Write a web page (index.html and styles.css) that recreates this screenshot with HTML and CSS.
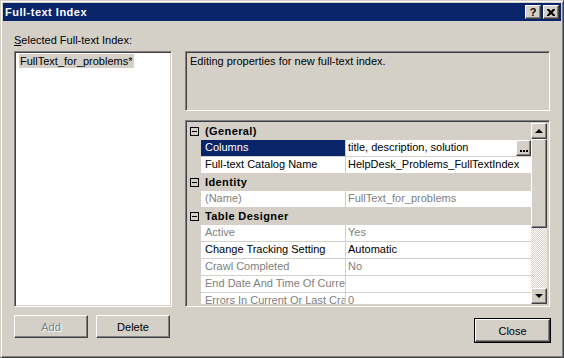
FILE: index.html
```html
<!DOCTYPE html>
<html lang="en">

<head>
    <meta charset="UTF-8">
    <title>Full-text Index</title>
    <link rel="stylesheet" href="styles.css">
</head>

<body>

    <div class="window">

        <header class="titlebar">
            <span class="title">Full-text Index</span>
            <div class="caption-buttons">
                <button class="cap-btn help">?</button>
                <button class="cap-btn">
                    <svg width="8" height="7" viewBox="0 0 8 7">
                        <path d="M0 0h2l2 2 2-2h2v1L5.5 3.5 8 6v1H6L4 5 2 7H0V6l2.5-2.5L0 1z" fill="#000" />
                    </svg>
                </button>
            </div>
        </header>

        <section class="content">

            <div class="label"><u>S</u>elected Full-text Index:</div>

            <div class="listbox sunken">
                <span class="list-item">FullText_for_problems*</span>
            </div>

            <div class="right">
                <div class="description sunken">Editing properties for new full-text index.</div>

                <div class="propgrid sunken">
                    <div class="rows">
                        <div class="row category"><span class="expander"></span>(General)</div>
                        <div class="row selected">
                            <span class="margin"></span>
                            <span class="name">Columns</span>
                            <span class="value">
                                <span class="value-text">title, description, solution</span>
                                <span class="ellipsis">
                                    <svg width="8" height="2" viewBox="0 0 8 2">
                                        <rect x="0" y="0" width="2" height="2" fill="#000" />
                                        <rect x="3" y="0" width="2" height="2" fill="#000" />
                                        <rect x="6" y="0" width="2" height="2" fill="#000" />
                                    </svg>
                                </span>
                            </span>
                        </div>
                        <div class="row">
                            <span class="margin"></span>
                            <span class="name">Full-text Catalog Name</span>
                            <span class="value">HelpDesk_Problems_FullTextIndex</span>
                        </div>
                        <div class="row category"><span class="expander"></span>Identity</div>
                        <div class="row readonly">
                            <span class="margin"></span>
                            <span class="name">(Name)</span>
                            <span class="value">FullText_for_problems</span>
                        </div>
                        <div class="row category"><span class="expander"></span>Table Designer</div>
                        <div class="row readonly">
                            <span class="margin"></span>
                            <span class="name">Active</span>
                            <span class="value">Yes</span>
                        </div>
                        <div class="row">
                            <span class="margin"></span>
                            <span class="name">Change Tracking Setting</span>
                            <span class="value">Automatic</span>
                        </div>
                        <div class="row readonly">
                            <span class="margin"></span>
                            <span class="name">Crawl Completed</span>
                            <span class="value">No</span>
                        </div>
                        <div class="row readonly">
                            <span class="margin"></span>
                            <span class="name">End Date And Time Of Current Crawl</span>
                            <span class="value"></span>
                        </div>
                        <div class="row readonly">
                            <span class="margin"></span>
                            <span class="name">Errors In Current Or Last Crawl</span>
                            <span class="value">0</span>
                        </div>
                    </div>

                    <div class="scrollbar">
                        <div class="sb-btn"><span class="arrow-up"></span></div>
                        <div class="track">
                            <div class="thumb"></div>
                        </div>
                        <div class="sb-btn"><span class="arrow-down"></span></div>
                    </div>
                </div>
            </div>

            <div class="left-buttons">
                <button class="btn" disabled>Add</button>
                <button class="btn">Delete</button>
            </div>

            <div class="close-cell">
                <button class="btn default">Close</button>
            </div>

        </section>

    </div>

</body>

</html>
```

FILE: styles.css
```css
* {
    box-sizing: border-box;
}

body {
    margin: 0;
    background-color: #d4d0c8;
    font-family: "Liberation Sans", Arial, sans-serif;
    font-size: 11px;
    color: #000;
}

/* classic 3d borders */
.sunken {
    border: 1px solid;
    border-color: #808080 #fff #fff #808080;
    box-shadow: inset 1px 1px #404040, inset -1px -1px #d4d0c8;
}

.btn,
.cap-btn,
.sb-btn,
.thumb,
.ellipsis {
    border: 1px solid;
    border-color: #fff #404040 #404040 #fff;
    box-shadow: inset -1px -1px #808080;
    background-color: #d4d0c8;
}

.window {
    width: 564px;
    height: 358px;
    border: 1px solid;
    border-color: #d4d0c8 #404040 #404040 #d4d0c8;
    box-shadow: inset 1px 1px #fff, inset -1px -1px #808080;
    padding: 2px;
}

.titlebar {
    height: 18px;
    background-color: #0a246a;
    display: flex;
    align-items: center;
    justify-content: space-between;
    padding: 0 2px 0 2px;
}

.title {
    color: #fff;
    font-weight: bold;
    letter-spacing: 0.5px;
}

.caption-buttons {
    display: flex;
    gap: 2px;
}

.cap-btn {
    width: 16px;
    height: 14px;
    padding: 0;
    display: flex;
    align-items: center;
    justify-content: center;
    font-family: "Liberation Sans", Arial, sans-serif;
    font-weight: bold;
    font-size: 11px;
    line-height: 12px;
}

.help {
    padding-bottom: 1px;
}

.content {
    display: grid;
    grid-template-columns: 158px 365px;
    grid-template-rows: 17px 256px auto;
    column-gap: 13px;
    padding: 13px 0 0 11px;
}

.label {
    grid-column: 1;
    line-height: 13px;
}

.listbox {
    grid-column: 1;
    grid-row: 2;
    background-color: #fff;
    padding: 2px 4px;
}

.list-item {
    display: inline-block;
    background-color: #d4d0c8;
    padding: 0 1px;
    line-height: 14px;
}

.right {
    grid-column: 2;
    grid-row: 2;
    display: flex;
    flex-direction: column;
    gap: 9px;
}

.description {
    height: 60px;
    padding: 3px 4px;
    line-height: 13px;
}

.propgrid {
    height: 187px;
    display: flex;
    overflow: hidden;
    padding: 2px;
}

.rows {
    flex: 1;
    overflow: hidden;
    background-color: #fff;
}

.row {
    display: grid;
    grid-template-columns: 13px 145px 1fr;
    height: 17px;
    line-height: 15px;
}

.margin {
    background-color: #d4d0c8;
}

.name {
    padding-left: 4px;
    border-right: 1px solid #d4d0c8;
    border-bottom: 1px solid #d4d0c8;
    white-space: nowrap;
    overflow: hidden;
}

.value {
    padding-left: 2px;
    border-bottom: 1px solid #d4d0c8;
    white-space: nowrap;
    overflow: hidden;
    display: flex;
}

.value-text {
    flex: 1;
}

.ellipsis {
    width: 15px;
    height: 16px;
    display: flex;
    align-items: flex-end;
    justify-content: center;
    padding-bottom: 3px;
}

.row.category {
    display: flex;
    align-items: center;
    background-color: #d4d0c8;
    font-weight: bold;
    letter-spacing: 0.4px;
    padding-left: 2px;
}

.expander {
    width: 9px;
    height: 9px;
    border: 1px solid #000;
    margin-right: 6px;
    background: linear-gradient(#000, #000) center / 5px 1px no-repeat;
}

.selected .name {
    background-color: #0a246a;
    color: #fff;
}

.readonly {
    color: #808080;
}

.scrollbar {
    width: 16px;
    display: flex;
    flex-direction: column;
}

.sb-btn {
    height: 16px;
    display: flex;
    align-items: center;
    justify-content: center;
}

.arrow-up,
.arrow-down {
    width: 0;
    height: 0;
    border-left: 4px solid transparent;
    border-right: 4px solid transparent;
}

.arrow-up {
    border-bottom: 4px solid #000;
}

.arrow-down {
    border-top: 4px solid #000;
}

.track {
    flex: 1;
    background: repeating-conic-gradient(#d4d0c8 0 25%, #fff 0 50%) 0 0 / 2px 2px;
}

.thumb {
    height: 89px;
}

.left-buttons {
    grid-column: 1;
    grid-row: 3;
    display: flex;
    gap: 8px;
    margin-top: 8px;
}

.btn {
    width: 74px;
    height: 23px;
    font-family: "Liberation Sans", Arial, sans-serif;
    font-size: 11px;
    color: #000;
    padding: 0;
}

.btn:disabled {
    color: #808080;
    text-shadow: 1px 1px #fff;
}

.close-cell {
    grid-column: 2;
    grid-row: 3;
    justify-self: end;
    margin-top: 12px;
}

.default {
    width: 75px;
    outline: 1px solid #000;
}
```
